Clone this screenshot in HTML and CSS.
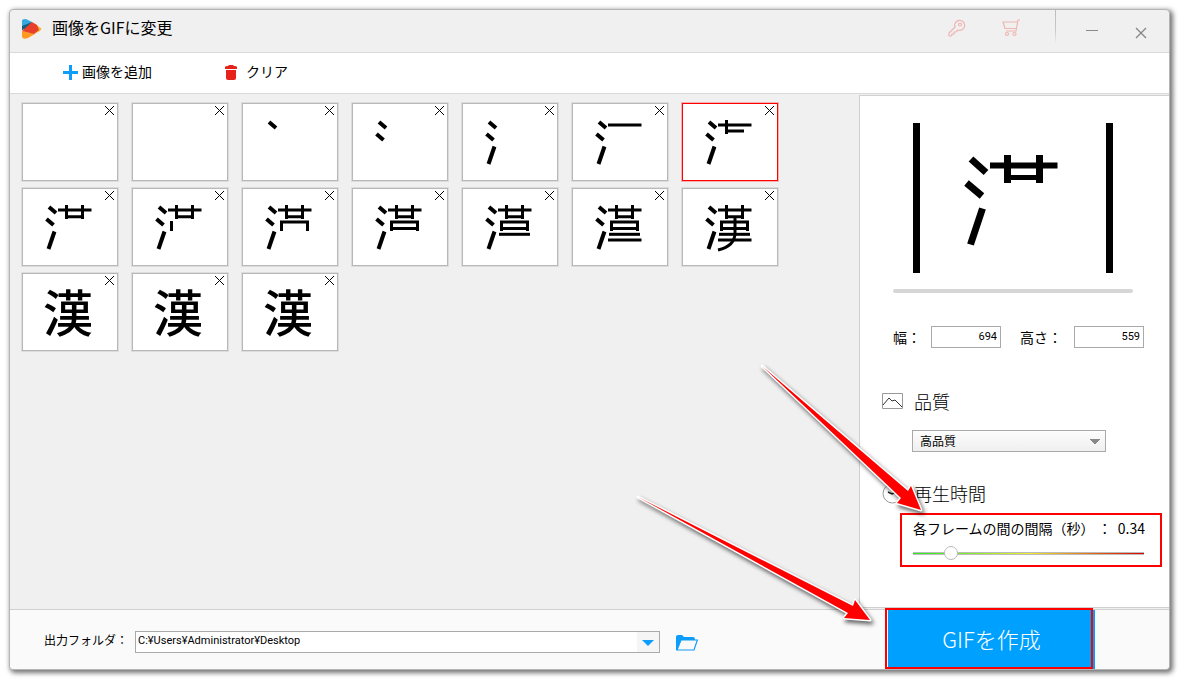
FILE: index.html
```html
<!DOCTYPE html>
<html lang="ja">
<head>
<meta charset="utf-8">
<title>画像をGIFに変更</title>
<link rel="stylesheet" href="styles.css">
</head>
<body>
<svg class="defs" width="0" height="0" aria-hidden="true">
  <defs>
    <path id="s1" d="M27 19L34 25"/>
    <path id="s2" d="M24.500 31L31.500 37"/>
    <path id="s3" d="M32.500 43.500L26.500 61"/>
    <g id="water" stroke-width="4"><use href="#s1"/><use href="#s2"/><use href="#s3"/></g>
    <path id="s4" d="M36 22H69.500"/>
    <path id="s5" d="M44.500 17V31M44.500 28H62"/>
    <path id="s6" d="M44.500 17V31M60.500 17V31M44.500 28.700H60.500"/>
    <g id="grass"><use href="#water"/><use href="#s4"/><use href="#s6"/></g>
    <path id="s7" d="M39.500 33V43"/>
    <path id="s8" d="M39.500 43V34H65.500V43"/>
    <g id="box"><use href="#grass"/><use href="#s8"/><path d="M39.500 40.500H65.500"/></g>
    <path id="s9" d="M37 46.300H68"/>
    <path id="s10" d="M36 52H69.500"/>
    <path id="s11" d="M53 28.700V45Q53 58 36 62"/>
  </defs>
</svg>
<div class="window">
  <header class="titlebar">
    <svg class="logo" width="20" height="22" viewBox="0 0 20 22" aria-hidden="true">
      <path d="M13 6L19 10Q20 11 18 13L12 16Z" fill="#f2b83c"/>
      <path d="M0 2Q1 1 4 1L10 4L0 12Z" fill="#36a9e1"/>
      <path d="M0 8L10 4L8 9L0 12Z" fill="#14607f"/>
      <path d="M0 13L13 16L6 20Q1 22 0 19Z" fill="#ff9a22"/>
      <path d="M10 4L15 7L17 12L12 16L0 13Z" fill="#e8402a"/>
    </svg>
    <h1>画像をGIFに変更</h1>
    <div class="title-actions">
      <button class="plain" aria-label="登録">
        <svg width="18" height="18" viewBox="0 0 18 18" fill="none" stroke="#efb5b2" stroke-width="1.200"><path d="M7 8A5 5 0 1 1 10 11L8 13H6V15H4V16L3 17H1V14Z"/><circle cx="12" cy="5.500" r="1.500"/></svg>
      </button>
      <button class="plain cart" aria-label="購入">
        <svg width="19" height="18" viewBox="0 0 19 18" fill="none" stroke="#efb5b2" stroke-width="1.200"><path d="M18 1H16L14 12H4M15 3H1L3 9.500H14"/><circle cx="5" cy="15" r="1.500"/><circle cx="12.500" cy="15" r="1.500"/></svg>
      </button>
      <span class="divider"></span>
      <button class="plain minimize" aria-label="最小化">
        <svg width="12" height="12" viewBox="0 0 12 12" stroke="#8a8a8a"><path d="M0 6.500H12"/></svg>
      </button>
      <button class="plain close" aria-label="閉じる">
        <svg width="12" height="12" viewBox="0 0 12 12" stroke="#858585" stroke-width="1.300"><path d="M1 1L11 11M11 1L1 11"/></svg>
      </button>
    </div>
  </header>

  <nav class="toolbar">
    <button class="plain tool">
      <svg width="15" height="15" viewBox="0 0 15 15" stroke="#0c9dfa" stroke-width="3"><path d="M7.500 0V15M0 7.500H15"/></svg>
      画像を追加
    </button>
    <button class="plain tool clear">
      <svg width="12" height="15" viewBox="0 0 12 15" fill="#e5231b"><path d="M0 2Q0 1 3 1L4 0H8L9 1Q12 1 12 2V4H0Z"/><path d="M1 5H11V13Q11 15 9 15H3Q1 15 1 13Z"/></svg>
      クリア
    </button>
  </nav>

  <div class="main">
    <ul class="frames">
      <li><button class="x" aria-label="削除"></button></li>
      <li><button class="x" aria-label="削除"></button></li>
      <li><svg viewBox="1 1 94 76"><use href="#s1" stroke-width="4"/></svg><button class="x" aria-label="削除"></button></li>
      <li><svg viewBox="1 1 94 76"><g stroke-width="4"><use href="#s1"/><use href="#s2"/></g></svg><button class="x" aria-label="削除"></button></li>
      <li><svg viewBox="1 1 94 76"><use href="#water"/></svg><button class="x" aria-label="削除"></button></li>
      <li><svg viewBox="1 1 94 76"><use href="#water"/><use href="#s4"/></svg><button class="x" aria-label="削除"></button></li>
      <li class="selected"><svg viewBox="1 1 94 76"><use href="#water"/><use href="#s4"/><use href="#s5"/></svg><button class="x" aria-label="削除"></button></li>
      <li><svg viewBox="1 1 94 76"><use href="#grass"/></svg><button class="x" aria-label="削除"></button></li>
      <li><svg viewBox="1 1 94 76"><use href="#grass"/><use href="#s7"/></svg><button class="x" aria-label="削除"></button></li>
      <li><svg viewBox="1 1 94 76"><use href="#grass"/><use href="#s8"/></svg><button class="x" aria-label="削除"></button></li>
      <li><svg viewBox="1 1 94 76"><use href="#box"/></svg><button class="x" aria-label="削除"></button></li>
      <li><svg viewBox="1 1 94 76"><use href="#box"/><use href="#s9"/></svg><button class="x" aria-label="削除"></button></li>
      <li><svg viewBox="1 1 94 76"><use href="#box"/><use href="#s9"/><use href="#s10"/></svg><button class="x" aria-label="削除"></button></li>
      <li><svg viewBox="1 1 94 76"><use href="#box"/><use href="#s9"/><use href="#s10"/><use href="#s11"/></svg><button class="x" aria-label="削除"></button></li>
      <li><span class="kanji">漢</span><button class="x" aria-label="削除"></button></li>
      <li><span class="kanji">漢</span><button class="x" aria-label="削除"></button></li>
      <li><span class="kanji">漢</span><button class="x" aria-label="削除"></button></li>
    </ul>

    <aside class="panel">
      <svg class="preview" width="200" height="150" viewBox="0 0 200 150" fill="none" stroke="#000" stroke-width="6">
        <path d="M3.500 0V150M196.500 0V150" stroke-width="7"/>
        <path d="M58 36L73 49.500M53.500 60L69 73M69.500 85.500L57.500 121.500" stroke-width="7"/>
        <path d="M77 42.500H144.500"/>
        <path d="M94.500 32V60M126.500 32V60" stroke-width="7"/>
        <path d="M94.500 54.500H126.500" stroke-width="5"/>
      </svg>
      <div class="progress"></div>
      <div class="sizes">
        <label for="w">幅：</label><input id="w" type="text" value="694">
        <label for="h" class="height-label">高さ：</label><input id="h" type="text" value="559">
      </div>
      <h2 class="quality-title">
        <svg width="21" height="16" viewBox="0 0 21 16" fill="#fff" stroke="#999"><path d="M.5.5H20.500V15.500H.5Z"/><path d="M1 12L7 5L10 8L13 7L20 14" fill="none" stroke="#333"/></svg>
        <label for="quality">品質</label>
      </h2>
      <select id="quality" class="quality"><option>高品質</option></select>
      <h2 class="time-title">
        <svg width="21" height="21" viewBox="0 0 21 21" fill="#fff" stroke="#999"><circle cx="10.500" cy="10.500" r="9.500"/><path d="M6 9L10 11L14 9" fill="none" stroke="#222" stroke-width="1.500"/></svg>
        再生時間
      </h2>
      <div class="interval">
        <div class="interval-text"><label for="delay">各フレームの間の間隔（秒） ：</label><output for="delay">0.34</output></div>
        <input id="delay" type="range" min="5" max="205" value="34">
      </div>
    </aside>
  </div>

  <footer class="footer">
    <label for="folder">出力フォルダ：</label>
    <div class="combo">
      <input id="folder" type="text" value="C:¥Users¥Administrator¥Desktop">
      <button aria-label="一覧"><svg width="12" height="6" viewBox="0 0 12 6" fill="#0c9dfa"><path d="M0 0H12L6 6Z"/></svg></button>
    </div>
    <button class="plain browse" aria-label="フォルダを開く">
      <svg width="22" height="16" viewBox="0 0 22 16"><path d="M0 15V2Q0 0 2 0H6L8 2H17Q19 2 19 5H5L1 15Z" fill="#0c9dfa"/><path d="M5 5H21.400L18 15H1Z" fill="#fafafa" stroke="#0c9dfa" stroke-width="1.200"/></svg>
    </button>
    <button class="create">GIFを作成</button>
  </footer>

  <svg class="arrows" width="540" height="320" viewBox="629 349 540 320" aria-hidden="true">
    <path d="M762 366L908 491L911 486L921 510L897 503L901 498Z"/>
    <path d="M638 497L853 606L855 600L870 620L844 618L848 613Z"/>
  </svg>
</div>
</body>
</html>
```
FILE: styles.css
```css
* { box-sizing: border-box; }

body {
  display: flex;
  min-height: 100vh;
  margin: 0;
  padding: 9px 10px 10px 9px;
  background: #fff;
  color: #000;
  font-family: "Noto Sans CJK JP", sans-serif;
  font-size: 14px;
  font-weight: 400;
  line-height: 20px;
}

button, input, select { font: inherit; color: inherit; }
h1, h2 { margin: 0; font-weight: 400; }
svg { display: block; flex: none; }
.defs { position: absolute; }

.plain { padding: 0; border: 0; background: none; }

.window {
  position: relative;
  flex: 1;
  display: flex;
  flex-direction: column;
  border: 1px solid #b5b5b5;
  border-radius: 4px;
  background: #f0f0f0;
  box-shadow: 2px 2px 5px 1px rgba(0, 0, 0, .55);
}

.titlebar {
  display: flex;
  align-items: flex-start;
  height: 43px;
  padding-left: 12px;
  border-bottom: 1px solid #d9d9d9;
}
.logo { margin-top: 8px; }
.titlebar h1 { margin: 7px 0 0 10px; font-size: 16px; line-height: 20px; }
.title-actions { display: flex; margin-left: auto; padding-right: 22px; }
.title-actions .plain { align-self: flex-start; margin-top: 9px; }
.title-actions .cart { margin-left: 36px; }
.divider {
  width: 1px;
  height: 34px;
  margin-left: 34px;
  background: linear-gradient(#bbb, #c8c8c8 60%, #f0f0f0);
}
.title-actions .minimize { margin: 14px 0 0 30px; }
.title-actions .close { margin: 17px 0 0 37px; }

.toolbar {
  display: flex;
  align-items: flex-start;
  gap: 73px;
  height: 41px;
  padding: 8px 0 0 53px;
  border-bottom: 1px solid #d9d9d9;
  background: #fff;
}
.tool { display: flex; align-items: center; gap: 4px; }
.tool svg { margin-top: 2px; }
.tool.clear { gap: 9px; }

.main { flex: 1; display: flex; }

.frames {
  flex: 1;
  display: flex;
  flex-wrap: wrap;
  align-content: flex-start;
  gap: 7px 14px;
  margin: 0;
  padding: 9px 12px;
  list-style: none;
}
.frames li {
  position: relative;
  width: 96px;
  height: 78px;
  border: 1px solid #b8b8b8;
  background: #fff;
  box-shadow: 0 0 0 1px #dcdcdc;
}
.frames .selected { border-color: #f00; box-shadow: 0 0 0 1px #f9b0b0; }
.frames svg { width: 94px; height: 76px; fill: none; stroke: #000; stroke-width: 3; }
.kanji { display: block; padding-left: 20px; font-size: 50px; font-weight: 500; line-height: 72px; }
.x {
  position: absolute;
  top: 2px;
  right: 3px;
  width: 9px;
  height: 9px;
  padding: 0;
  border: 0;
  background:
    linear-gradient(45deg, transparent 46%, #000 46%, #000 54%, transparent 54%),
    linear-gradient(-45deg, transparent 46%, #000 46%, #000 54%, transparent 54%);
}

.panel {
  width: 310px;
  margin: 1px 0;
  padding: 27px 0 0 22px;
  border: 1px solid #d0d0d0;
  border-right: 0;
  background: #fff;
}
.preview { margin-left: 31px; }
.progress {
  width: 240px;
  height: 4px;
  margin: 16px 0 0 11px;
  border-radius: 2px;
  background: #d6d6d6;
}
.sizes { display: flex; align-items: center; margin: 33px 0 0 11px; }
.sizes label { width: 38px; }
.sizes .height-label { width: 54px; margin-left: 19px; }
.sizes input {
  width: 70px;
  height: 22px;
  padding: 0 3px 2px;
  border: 1px solid #aaa;
  font-family: Roboto, sans-serif;
  font-size: 11px;
  text-align: right;
}
.panel h2 {
  display: flex;
  align-items: center;
  gap: 11px;
  font-size: 18px;
  font-weight: 300;
  line-height: 24px;
}
.quality-title { margin-top: 41px; }
.quality {
  display: block;
  width: 194px;
  height: 22px;
  margin: 17px 0 0 30px;
  padding: 0 7px;
  border: 1px solid #aaa;
  border-radius: 0;
  appearance: none;
  background:
    linear-gradient(to bottom left, #888 50%, transparent 50%) 176px 8px / 6px 6px no-repeat,
    linear-gradient(to bottom right, #888 50%, transparent 50%) 182px 8px / 6px 6px no-repeat,
    linear-gradient(#fdfdfd, #efefef);
  font-size: 12px;
}
.time-title { margin-top: 29px; }
.interval {
  width: 262px;
  height: 54px;
  margin: 8px 0 0 18px;
  padding: 3px 15px 0 11px;
  border: 2px solid #f00;
}
.interval-text { display: flex; justify-content: space-between; line-height: 20px; }
#delay {
  display: block;
  width: 231px;
  height: 14px;
  margin: 8px 0 0;
  appearance: none;
  background: linear-gradient(90deg, #2e2, #ee3 50%, #d00) center / 100% 1px no-repeat,
    linear-gradient(#bbb, #bbb) center / 100% 3px no-repeat;
}
#delay::-webkit-slider-thumb {
  appearance: none;
  width: 14px;
  height: 14px;
  border: 1px solid #bbb;
  border-radius: 50%;
  background: #fff;
}

.footer {
  display: flex;
  align-items: center;
  height: 60px;
  padding-left: 34px;
  border-top: 1px solid #d0d0d0;
  border-radius: 0 0 4px 4px;
  background: #fafafa;
}
.footer label { width: 91px; font-size: 12px; }
.combo {
  display: flex;
  flex: 0 1 525px;
  height: 22px;
  margin-top: 5px;
  border: 1px solid #aaa;
  background: #fff;
}
.combo input {
  flex: 1;
  min-width: 0;
  padding: 0 2px 3px;
  border: 0;
  background: none;
  font-family: Roboto, sans-serif;
  font-size: 11px;
}
.combo button {
  display: flex;
  align-items: center;
  justify-content: center;
  width: 22px;
  padding: 2px 0 0;
  border: 0;
  background: #f5f5f5;
}
.browse { margin: 6px 0 0 16px; }
.create {
  position: relative;
  align-self: stretch;
  width: 207px;
  margin: 0 74px 0 auto;
  padding: 0 0 4px;
  border: 0;
  background: #00a0ff;
  color: #fff;
  font-size: 22px;
  font-weight: 300;
}
.create::after {
  content: "";
  position: absolute;
  inset: -2px 2px 0 -3px;
  border: 2px solid #f00;
}

.arrows {
  position: absolute;
  right: 0;
  bottom: 0;
  fill: #f00;
  stroke: #fff;
  stroke-width: 3;
  stroke-linejoin: round;
  paint-order: stroke;
  filter: drop-shadow(2px 3px 2px rgba(0, 0, 0, .6));
  pointer-events: none;
}
```
